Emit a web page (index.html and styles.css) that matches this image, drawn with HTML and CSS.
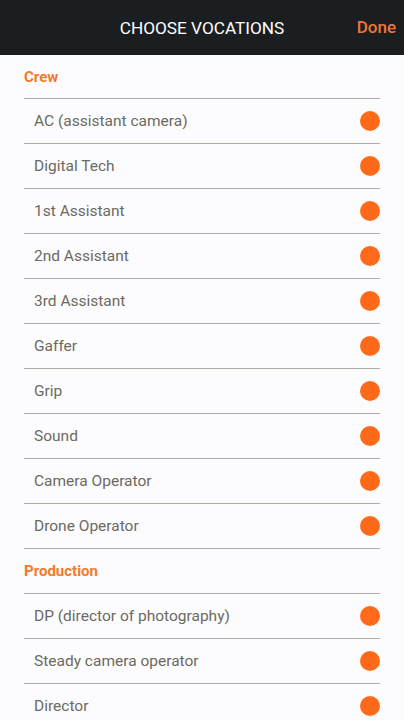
FILE: index.html
```html
<!DOCTYPE html>
<html>
<head>
<title>Choose Vocations</title>
<link rel="stylesheet" href="styles.css">
</head>
<body>
<div class="topbar">
    <span class="title">CHOOSE VOCATIONS</span>
    <span class="done">Done</span>
</div>
<div class="list">
    <div class="section">Crew</div>
    <div class="item"><span>AC (assistant camera)</span><i class="dot"></i></div>
    <div class="item"><span>Digital Tech</span><i class="dot"></i></div>
    <div class="item"><span>1st Assistant</span><i class="dot"></i></div>
    <div class="item"><span>2nd Assistant</span><i class="dot"></i></div>
    <div class="item"><span>3rd Assistant</span><i class="dot"></i></div>
    <div class="item"><span>Gaffer</span><i class="dot"></i></div>
    <div class="item"><span>Grip</span><i class="dot"></i></div>
    <div class="item"><span>Sound</span><i class="dot"></i></div>
    <div class="item"><span>Camera Operator</span><i class="dot"></i></div>
    <div class="item"><span>Drone Operator</span><i class="dot"></i></div>
    <div class="section">Production</div>
    <div class="item"><span>DP (director of photography)</span><i class="dot"></i></div>
    <div class="item"><span>Steady camera operator</span><i class="dot"></i></div>
    <div class="item"><span>Director</span><i class="dot"></i></div>
</div>
</body>
</html>
```

FILE: styles.css
```css
body {
    margin: 0;
    font-family: Roboto, "Liberation Sans", sans-serif;
    background-color: #fcfcff;
    overflow: hidden;
}
.topbar {
    height: 55px;
    background-color: #1b1e21;
    display: flex;
    align-items: center;
    justify-content: center;
    position: relative;
}
.title {
    color: #ffffff;
    font-size: 17.2px;
}
.done {
    position: absolute;
    right: 8px;
    top: 17px;
    color: #f0743a;
    font-size: 17px;
    font-weight: 500;
}
.list {
    padding: 0 24px;
}
.section {
    height: 43px;
    border-bottom: 1px solid #aeaca4;
    display: flex;
    align-items: center;
    color: #f57a2a;
    font-size: 15px;
    font-weight: bold;
}
.list .section:not(:first-child) {
    height: 44px;
}
.item {
    height: 44px;
    border-bottom: 1px solid #aeaca4;
    display: flex;
    align-items: center;
    justify-content: space-between;
    padding-left: 10px;
    color: #6c6a5e;
    font-size: 15.5px;
}
.dot {
    width: 20px;
    height: 20px;
    border-radius: 50%;
    background-color: #ff6a1a;
}
```
